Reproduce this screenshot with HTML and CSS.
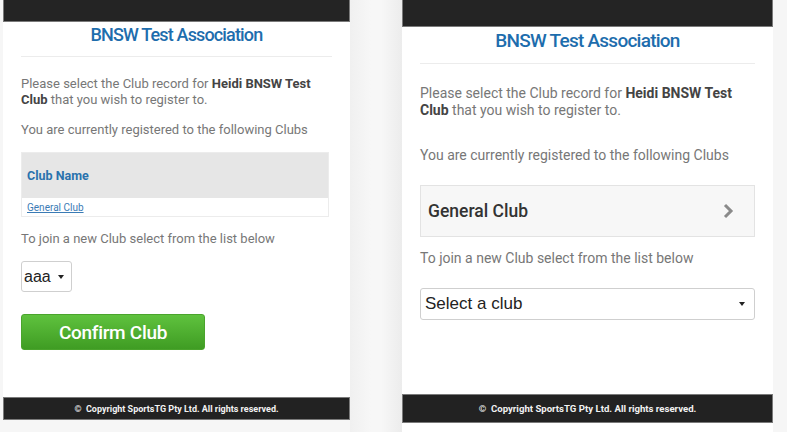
FILE: index.html
```html
<!DOCTYPE html>
<html>
<head>
<meta charset="utf-8">
<link rel="stylesheet" href="styles.css">
</head>
<body>
<div class="stage">
  <section class="phone phone-left">
    <div class="topbar"></div>
    <div class="content">
      <h1 class="title">BNSW Test Association</h1>
      <div class="rule"></div>
      <p class="para p1">Please select the Club record for <b>Heidi BNSW Test Club</b> that you wish to register to.</p>
      <p class="para p2">You are currently registered to the following Clubs</p>
      <div class="table">
        <div class="thead">Club Name</div>
        <div class="trow"><a href="#">General Club</a></div>
      </div>
      <p class="para p3">To join a new Club select from the list below</p>
      <div class="mini-select"><span>aaa</span><span class="caret"></span></div>
      <button class="confirm">Confirm Club</button>
    </div>
    <footer class="footer">&#169;&nbsp; Copyright SportsTG Pty Ltd. All rights reserved.</footer>
  </section>
  <div class="gutter"></div>
  <section class="phone phone-right">
    <div class="topbar"></div>
    <div class="content">
      <h1 class="title">BNSW Test Association</h1>
      <div class="rule"></div>
      <p class="para p1">Please select the Club record for <b>Heidi BNSW Test Club</b> that you wish to register to.</p>
      <p class="para p2">You are currently registered to the following Clubs</p>
      <div class="club-card">
        <span>General Club</span>
        <svg class="chev" width="12" height="16" viewBox="0 0 12 16"><path d="M3 2 L9 8 L3 14" fill="none" stroke="#8a8a8a" stroke-width="3"/></svg>
      </div>
      <p class="para p3">To join a new Club select from the list below</p>
      <div class="big-select"><span>Select a club</span><span class="caret"></span></div>
    </div>
    <footer class="footer">&#169;&nbsp; Copyright SportsTG Pty Ltd. All rights reserved.</footer>
  </section>
</div>
</body>
</html>
```

FILE: styles.css
```css
* { box-sizing: border-box; }
html, body { margin: 0; padding: 0; }
body {
  background: #f6f6f6;
  font-family: Roboto, "Liberation Sans", sans-serif;
  width: 787px;
  height: 432px;
  overflow: hidden;
}
.stage {
  display: flex;
  align-items: flex-start;
  padding-left: 3px;
  height: 432px;
}
.gutter {
  width: 52px;
  height: 432px;
  background: linear-gradient(to right, #f0f0f0 0, #f7f7f7 40%, #f7f7f7 60%, #ececec 100%);
}
.phone {
  background: #fff;
  display: flex;
  flex-direction: column;
}
.phone-left { width: 347px; height: 420px; }
.phone-right { width: 371px; height: 432px; }
.topbar {
  background: #242424;
  border: 1px solid #7a7a7a;
  border-top: none;
}
.phone-left .topbar { height: 22px; }
.phone-right .topbar { height: 27px; }
.content { flex: 1; padding: 0 18px; }
.title {
  margin: 0;
  text-align: center;
  color: #1d6dad;
  font-weight: 500;
}
.phone-left .title { font-size: 18px; line-height: 24px; margin-top: 1px; letter-spacing: -0.85px; }
.phone-right .title { font-size: 19px; line-height: 26px; margin-top: 1px; letter-spacing: -0.75px; }
.rule { height: 1px; background: #ececec; margin-top: 9px; }
.para { margin: 0; color: #777; }
.para b { color: #444; font-weight: 700; }
.phone-left .para { font-size: 13px; line-height: 16px; }
.phone-left .p1 { margin-top: 19px; }
.phone-left .p2 { margin-top: 14px; }
.phone-left .p3 { margin-top: 14px; }
.table { margin-top: 14px; width: 308px; border: 1px solid #ececec; }
.thead {
  height: 45px;
  background: #e6e6e6;
  color: #2a72ad;
  font-weight: 700;
  font-size: 12.5px;
  display: flex;
  align-items: center;
  padding-left: 5px;
}
.trow { height: 18px; display: flex; align-items: center; padding-left: 5px; }
.trow a { color: #3a7bb5; font-size: 10px; text-decoration: underline; }
.mini-select {
  margin-top: 14px;
  width: 51px;
  height: 31px;
  border: 1px solid #cfcfcf;
  border-radius: 3px;
  display: flex;
  align-items: center;
  padding-left: 2px;
  gap: 7px;
  font-family: "Liberation Sans", Arial, sans-serif;
  font-size: 16px;
  color: #222;
}
.caret {
  width: 0; height: 0;
  border-left: 3.5px solid transparent;
  border-right: 3.5px solid transparent;
  border-top: 4px solid #222;
}
.confirm {
  display: flex;
  align-items: center;
  justify-content: center;
  margin-top: 22px;
  width: 184px;
  height: 36px;
  border: 1px solid #4aa42c;
  border-radius: 3px;
  background: linear-gradient(#5fc23e, #3f9c23);
  color: #fff;
  font-family: Roboto, sans-serif;
  font-weight: 500;
  font-size: 19px;
  letter-spacing: -0.3px;
  padding: 0;
}
.footer {
  background: #222;
  color: #f2f2f2;
  border: 1px solid #7a7a7a;
  font-weight: 700;
  display: flex;
  align-items: center;
  justify-content: center;
}
.phone-left .footer { height: 23px; font-size: 9px; }
.phone-right .footer { height: 29px; margin-bottom: 9px; font-size: 9.6px; }
.phone-right .para { font-size: 14px; line-height: 17px; }
.phone-right .p1 { margin-top: 21px; }
.phone-right .p2 { margin-top: 28px; }
.phone-right .p3 { margin-top: 13px; }
.club-card {
  margin-top: 21px;
  height: 52px;
  border: 1px solid #e3e3e3;
  background: #f7f7f7;
  display: flex;
  align-items: center;
  justify-content: space-between;
  padding: 0 20px 0 7px;
  color: #333;
  font-size: 17.5px;
  font-weight: 500;
}
.big-select {
  margin-top: 21px;
  height: 32px;
  border: 1px solid #cfcfcf;
  border-radius: 3px;
  display: flex;
  align-items: center;
  justify-content: space-between;
  padding: 0 9px 0 4px;
  font-family: "Liberation Sans", Arial, sans-serif;
  font-size: 17px;
  color: #222;
}
```
